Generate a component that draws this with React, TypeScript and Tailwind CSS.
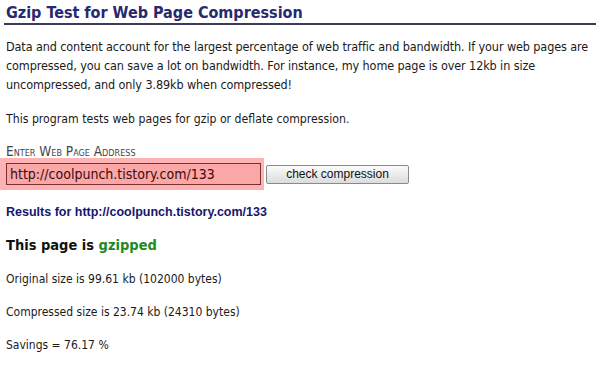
import React from "react";

export default function App() {
  const body = { fontFamily: '"DejaVu Sans Condensed", "DejaVu Sans", sans-serif' };
  return (
    <div className="w-[600px] h-[365px] bg-white overflow-hidden text-[#111]" style={body}>
      <div className="px-[6px] pt-[3px]">
        <h1 className="text-[16px] leading-[20px] font-bold text-[#28296e]">
          Gzip Test for Web Page Compression
        </h1>
      </div>
      <div className="mx-[4px] h-[2px] bg-[#3b3b5c]" />
      <div className="px-[6px]">
        <p className="mt-[12px] text-[12.5px] leading-[19px] tracking-[-0.1px] text-[#1a1a1a] whitespace-nowrap">
          Data and content account for the largest percentage of web traffic and bandwidth. If your web pages are
          <br />
          compressed, you can save a lot on bandwidth. For instance, my home page is over 12kb in size
          <br />
          uncompressed, and only 3.89kb when compressed!
        </p>
        <p className="mt-[16px] text-[12.2px] leading-[19px] text-[#1a1a1a]">
          This program tests web pages for gzip or deflate compression.
        </p>
        <div className="mt-[15px] text-[13.5px] leading-[14px] text-[#444] [font-variant:small-caps]">
          Enter Web Page Address
        </div>
      </div>
      <div className="flex items-center">
        <div className="w-[264px] bg-[#fdb3b3] px-[6px] py-[5px]">
          <div className="h-[22px] w-[255px] border border-[#7a3030] bg-[#fca7a7] px-[3px] flex items-center text-[14px] text-[#3a0c0c]">
            http://coolpunch.tistory.com/133
          </div>
        </div>
        <button
          className="ml-[2px] h-[19px] w-[143px] border border-[#8a8a8a] rounded-[2px] bg-gradient-to-b from-[#fbfbfb] to-[#dcdcdc] text-[12px] leading-[17px] text-[#111]"
          style={{ fontFamily: '"Liberation Sans", Arial, sans-serif' }}
        >
          check compression
        </button>
      </div>
      <div className="px-[6px]">
        <div
          className="mt-[14px] text-[12.5px] leading-[16px] font-bold text-[#16166c]"
          style={{ fontFamily: '"Liberation Sans", Arial, sans-serif' }}
        >
          Results for http://coolpunch.tistory.com/133
        </div>
        <div className="mt-[15px] text-[14.5px] leading-[20px] font-bold text-[#111]">
          This page is <span className="text-[#1f8a1f]">gzipped</span>
        </div>
        <div className="mt-[16px] text-[12px] leading-[16px] text-[#1a1a1a]">
          Original size is 99.61 kb (102000 bytes)
        </div>
        <div className="mt-[17px] text-[12px] leading-[16px] text-[#1a1a1a]">
          Compressed size is 23.74 kb (24310 bytes)
        </div>
        <div className="mt-[17px] text-[12px] leading-[16px] text-[#1a1a1a]">
          Savings = 76.17 %
        </div>
      </div>
    </div>
  );
}
